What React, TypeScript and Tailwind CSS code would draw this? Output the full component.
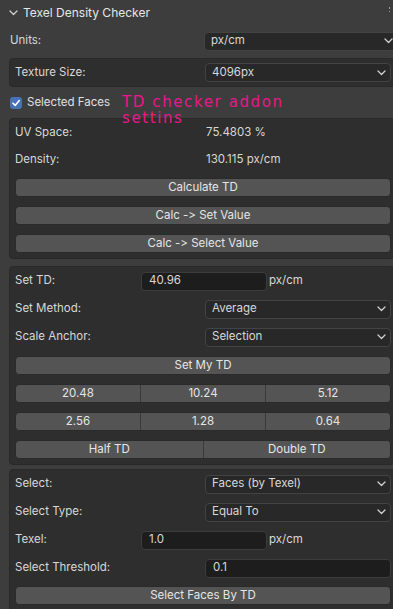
import React from "react";

const Chev = ({ className = "" }: { className?: string }) => (
  <svg width="9" height="6" viewBox="0 0 9 6" className={className}>
    <path d="M1 1 L4.5 4.5 L8 1" fill="none" stroke="#d0d0d0" strokeWidth="1.3" strokeLinecap="round" strokeLinejoin="round" />
  </svg>
);

const Dropdown = ({ text }: { text: string }) => (
  <div className="h-[19px] flex-1 flex items-center justify-between rounded-[4px] bg-[#282828] border border-[#434343] pl-[6px] pr-[4px]">
    <span>{text}</span>
    <Chev />
  </div>
);

const Input = ({ text, className = "" }: { text: string; className?: string }) => (
  <div className={"h-[19px] flex items-center rounded-[4px] bg-[#1d1d1d] border border-[#3c3c3c] pl-[7px] " + className}>
    <span>{text}</span>
  </div>
);

const Button = ({ text, className = "" }: { text: string; className?: string }) => (
  <div className={"h-[19px] flex items-center justify-center rounded-[4px] bg-[#545454] border border-[#2a2a2a] text-[#e6e6e6] " + className}>
    {text}
  </div>
);

const Row = ({ label, children }: { label: string; children: React.ReactNode }) => (
  <div className="h-[28px] flex items-center">
    <div className="w-[190px] shrink-0">{label}</div>
    {children}
  </div>
);

const Box = ({ children, className = "" }: { children: React.ReactNode; className?: string }) => (
  <div className={"ml-[9px] mr-[3px] pl-[5px] pr-[3px] rounded-[4px] bg-[#2e2e2e] border border-[#292929] " + className}>{children}</div>
);

const Seg = ({ items }: { items: string[] }) => (
  <div className="h-[19px] flex rounded-[4px] bg-[#545454] border border-[#2a2a2a] text-[#e6e6e6] overflow-hidden">
    {items.map((t, i) => (
      <div
        key={t}
        className={"flex-1 flex items-center justify-center " + (i > 0 ? "border-l border-[#3a3a3a]" : "")}
      >
        {t}
      </div>
    ))}
  </div>
);

export default function App() {
  return (
    <div
      className="relative w-[393px] h-[609px] overflow-hidden bg-[#3d3d3d] text-[#d8d8d8] text-[11.5px] [font-feature-settings:'calt'_0,'liga'_0]"
      style={{ fontFamily: "Inter, 'Noto Sans', sans-serif" }}
    >
      <div className="w-[398px]">
        {/* header */}
        <div className="h-[26px] flex items-center pl-[9px]">
          <Chev className="mr-[5px]" />
          <span className="text-[12px] text-[#e6e6e6]">Texel Density Checker</span>
        </div>
        <div className="absolute right-[3px] top-[7px] flex flex-col gap-[2px]">
          <div className="w-[1.5px] h-[1.5px] bg-[#9a9a9a]" />
          <div className="w-[1.5px] h-[1.5px] bg-[#9a9a9a]" />
        </div>

        {/* Units */}
        <div className="h-[30px] flex items-center pl-[10px]">
          <div className="w-[194px] shrink-0">Units:</div>
          <Dropdown text="px/cm" />
        </div>

        <Box className="mt-[2px] h-[29px] flex items-center">
          <div className="w-[190px] shrink-0">Texture Size:</div>
          <Dropdown text="4096px" />
        </Box>

        {/* Selected faces */}
        <div className="relative h-[31px] flex items-center pl-[10px]">
          <div className="w-[12px] h-[12px] rounded-[3px] bg-[#4772b3] flex items-center justify-center mr-[5px]">
            <svg width="10" height="10" viewBox="0 0 10 10">
              <path d="M2 5.2 L4.2 7.4 L8.2 2.6" fill="none" stroke="#ffffff" strokeWidth="1.6" strokeLinecap="round" strokeLinejoin="round" />
            </svg>
          </div>
          <span className="text-[#e0e0e0]">Selected Faces</span>
        </div>

        <Box className="pb-[5px]">
          <div className="h-[27px] flex items-center">
            <div className="w-[191px] shrink-0">UV Space:</div>
            <span>75.4803 %</span>
          </div>
          <div className="h-[27px] flex items-center">
            <div className="w-[191px] shrink-0">Density:</div>
            <span>130.115 px/cm</span>
          </div>
          <Button text="Calculate TD" className="mt-[5px]" />
          <Button text="Calc -> Set Value" className="mt-[9px]" />
          <Button text="Calc -> Select Value" className="mt-[9px]" />
        </Box>

        <Box className="mt-[7px] pb-[5px]">
          <div className="h-[28px] flex items-center">
            <div className="w-[126px] shrink-0">Set TD:</div>
            <Input text="40.96" className="w-[126px]" />
            <span className="ml-[2px]">px/cm</span>
          </div>
          <Row label="Set Method:">
            <Dropdown text="Average" />
          </Row>
          <Row label="Scale Anchor:">
            <Dropdown text="Selection" />
          </Row>
          <Button text="Set My TD" className="mt-[5px]" />
          <div className="mt-[9px]">
            <Seg items={["20.48", "10.24", "5.12"]} />
          </div>
          <div className="mt-[9px]">
            <Seg items={["2.56", "1.28", "0.64"]} />
          </div>
          <div className="mt-[9px]">
            <Seg items={["Half TD", "Double TD"]} />
          </div>
        </Box>

        <Box className="mt-[4px] pb-[5px]">
          <Row label="Select:">
            <Dropdown text="Faces (by Texel)" />
          </Row>
          <Row label="Select Type:">
            <Dropdown text="Equal To" />
          </Row>
          <div className="h-[28px] flex items-center">
            <div className="w-[126px] shrink-0">Texel:</div>
            <Input text="1.0" className="w-[126px]" />
            <span className="ml-[2px]">px/cm</span>
          </div>
          <Row label="Select Threshold:">
            <Input text="0.1" className="flex-1" />
          </Row>
          <Button text="Select Faces By TD" className="mt-[4px]" />
        </Box>
      </div>

      {/* annotation */}
      <div
        className="absolute left-[122px] top-[94px] text-[15px] leading-[16px] tracking-[1.6px] text-[#e8178a]"
        style={{ fontFamily: "'DejaVu Sans', sans-serif" }}
      >
        <div>TD checker addon</div>
        <div>settins</div>
      </div>
    </div>
  );
}
